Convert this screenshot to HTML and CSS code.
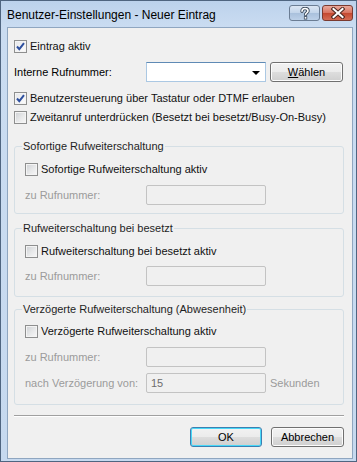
FILE: index.html
```html
<!DOCTYPE html>
<html lang="de">
<head>
    <meta charset="UTF-8">
    <title>Benutzer-Einstellungen - Neuer Eintrag</title>
    <link rel="stylesheet" href="styles.css">
</head>
<body>
    <div class="window">
        <div class="titlebar">
            <span class="title">Benutzer-Einstellungen - Neuer Eintrag</span>
            <div class="caption-buttons">
                <span class="cap-btn cap-help">
                    <svg width="12" height="13" viewBox="0 0 12 13"><path d="M3 4.2 C3 2 4.5 1.5 6 1.5 C7.8 1.5 9 2.4 9 3.9 C9 5.6 6.6 5.9 6.6 7.6" fill="none" stroke="#3c4a5c" stroke-width="3.4" stroke-linecap="round"/><path d="M3 4.2 C3 2 4.5 1.5 6 1.5 C7.8 1.5 9 2.4 9 3.9 C9 5.6 6.6 5.9 6.6 7.6" fill="none" stroke="#fff" stroke-width="1.6" stroke-linecap="round"/><rect x="4.9" y="9.2" width="3.3" height="3.3" fill="#3c4a5c"/><rect x="5.7" y="10" width="1.7" height="1.7" fill="#fff"/></svg>
                </span>
                <span class="cap-btn cap-close">
                    <svg width="14" height="12" viewBox="0 0 14 12"><path d="M2.5 2 L11.5 10 M11.5 2 L2.5 10" stroke="#4a2620" stroke-width="4" stroke-linecap="square"/><path d="M2.5 2 L11.5 10 M11.5 2 L2.5 10" stroke="#fff" stroke-width="2" stroke-linecap="square"/></svg>
                </span>
            </div>
        </div>
        <div class="client">
            <div class="content">
                <label class="check-row first">
                    <span class="checkbox checked"><svg width="11" height="11" viewBox="0 0 11 11"><path d="M2 5.5 L4.3 8.2 L9 2.2" fill="none" stroke="#2d4f9e" stroke-width="2"/></svg></span>
                    Eintrag aktiv
                </label>

                <div class="field-row combo-row">
                    <span class="field-label">Interne Rufnummer:</span>
                    <span class="combo"><span class="combo-arrow"></span></span>
                    <button class="btn btn-pick"><u>W</u>ählen</button>
                </div>

                <label class="check-row dtmf">
                    <span class="checkbox checked"><svg width="11" height="11" viewBox="0 0 11 11"><path d="M2 5.5 L4.3 8.2 L9 2.2" fill="none" stroke="#2d4f9e" stroke-width="2"/></svg></span>
                    Benutzersteuerung über Tastatur oder DTMF erlauben
                </label>

                <label class="check-row busy">
                    <span class="checkbox"></span>
                    Zweitanruf unterdrücken (Besetzt bei besetzt/Busy-On-Busy)
                </label>

                <fieldset class="group group-instant">
                    <legend>Sofortige Rufweiterschaltung</legend>
                    <label class="check-row">
                        <span class="checkbox"></span>
                        Sofortige Rufweiterschaltung aktiv
                    </label>
                    <div class="field-row">
                        <span class="field-label disabled">zu Rufnummer:</span>
                        <span class="input disabled"></span>
                    </div>
                </fieldset>

                <fieldset class="group group-busy">
                    <legend>Rufweiterschaltung bei besetzt</legend>
                    <label class="check-row">
                        <span class="checkbox"></span>
                        Rufweiterschaltung bei besetzt aktiv
                    </label>
                    <div class="field-row">
                        <span class="field-label disabled">zu Rufnummer:</span>
                        <span class="input disabled"></span>
                    </div>
                </fieldset>

                <fieldset class="group group-delay">
                    <legend>Verzögerte Rufweiterschaltung (Abwesenheit)</legend>
                    <label class="check-row">
                        <span class="checkbox"></span>
                        Verzögerte Rufweiterschaltung aktiv
                    </label>
                    <div class="field-row">
                        <span class="field-label disabled">zu Rufnummer:</span>
                        <span class="input disabled"></span>
                    </div>
                    <div class="field-row delay-row">
                        <span class="field-label disabled">nach Verzögerung von:</span>
                        <span class="input disabled">15</span>
                        <span class="unit disabled">Sekunden</span>
                    </div>
                </fieldset>

                <div class="separator"></div>

                <div class="dialog-buttons">
                    <button class="btn btn-default">OK</button>
                    <button class="btn">Abbrechen</button>
                </div>
            </div>
        </div>
    </div>
</body>
</html>
```

FILE: styles.css
```css
body {
    margin: 0;
    font-family: "Liberation Sans", Arial, sans-serif;
    font-size: 11px;
    color: #000;
    background: #2b3a4e;
}

.window {
    width: 357px;
    height: 462px;
    box-sizing: border-box;
    border: 1px solid #4f6580;
    padding: 0 3px 2px 6px;
    background: linear-gradient(to bottom, #bcd2ec 0, #cadcf1 26px, #c6d9ef 100%);
    display: flex;
    flex-direction: column;
}

.titlebar {
    height: 26px;
    display: flex;
    align-items: center;
    justify-content: space-between;
}

.title {
    font-size: 12px;
    margin-top: 1px;
}

.caption-buttons {
    display: flex;
    gap: 2px;
    align-self: flex-start;
    margin-top: 4px;
}

.cap-btn {
    height: 16px;
    box-sizing: border-box;
    border: 1px solid #6b7d94;
    border-radius: 3px;
    display: flex;
    align-items: center;
    justify-content: center;
}

.cap-help {
    width: 31px;
    background: linear-gradient(to bottom, #dbe6f3 0, #c2d4ea 50%, #a9c0dc 51%, #bcd0e8 100%);
}

.cap-close {
    width: 31px;
    border-color: #7a3a30;
    background: linear-gradient(to bottom, #e9a99c 0, #d8725f 50%, #c3472f 51%, #d46c55 100%);
}

.client {
    flex: 1;
    border: 1px solid #8fa6c0;
    background: #f0f0f0;
}

.content {
    padding: 12px 8px 0 6px;
}

.check-row {
    display: flex;
    align-items: center;
    height: 13px;
    line-height: 13px;
    white-space: nowrap;
    color: #111;
}

.checkbox {
    width: 13px;
    height: 13px;
    box-sizing: border-box;
    border: 1px solid #8e8f8f;
    background: linear-gradient(135deg, #cdd0d4 0, #e8e9ea 55%, #f8f8f8 100%);
    box-shadow: inset 0 0 0 1px #f4f4f4;
    margin-right: 3px;
    flex: none;
    display: flex;
    align-items: center;
    justify-content: center;
}

.checkbox.checked {
    background: linear-gradient(135deg, #e4e6ea 0, #f4f4f5 60%, #fcfcfc 100%);
}

.field-row {
    display: flex;
    align-items: center;
    height: 20px;
}

.field-label {
    width: 132px;
    flex: none;
}

.group .field-label {
    width: 121px;
}

.disabled {
    color: #9b9b9b;
}

.combo-row {
    margin-top: 9px;
}

.combo {
    width: 120px;
    height: 20px;
    box-sizing: border-box;
    border: 1px solid #abc8e3;
    border-top-color: #5f8ab5;
    background: #fff;
    position: relative;
}

.combo-arrow {
    position: absolute;
    right: 5px;
    top: 8px;
    border-left: 4px solid transparent;
    border-right: 4px solid transparent;
    border-top: 4px solid #000;
}

.btn {
    font-family: inherit;
    font-size: 11px;
    color: #000;
    height: 20px;
    width: 73px;
    padding: 0;
    box-sizing: border-box;
    border: 1px solid #707070;
    border-radius: 3px;
    background: linear-gradient(to bottom, #f2f2f2 0, #ebebeb 50%, #dddddd 51%, #cfcfcf 100%);
    box-shadow: inset 0 0 0 1px #fcfcfc;
}

.btn-pick {
    margin-left: 4px;
}

.btn-default {
    border-color: #3c7fb1;
    box-shadow: inset 0 0 0 1px #48d8f8;
    width: 72px;
}

.dtmf {
    margin-top: 10px;
}

.busy {
    margin-top: 6px;
}

.group {
    margin: 0;
    padding: 0 0 0 10px;
    border: 1px solid #d5dfe5;
    border-radius: 3px;
    min-width: 0;
}

.group legend {
    margin-left: -3px;
    padding: 0 1px;
    line-height: 14px;
    color: #1f1f1f;
}

.group .check-row {
    margin-top: 10px;
}

.group-instant {
    margin-top: 15px;
    padding-bottom: 8px;
}

.group-instant .field-row {
    margin-top: 9px;
}

.group-busy {
    margin-top: 7px;
    padding-bottom: 10px;
}

.group-busy .field-row {
    margin-top: 8px;
}

.group-delay {
    margin-top: 5px;
    padding-bottom: 11px;
}

.group-delay .check-row {
    margin-top: 9px;
}

.group-delay .field-row {
    margin-top: 9px;
}

.group-delay .delay-row {
    margin-top: 6px;
}

.input {
    width: 120px;
    height: 20px;
    box-sizing: border-box;
    border: 1px solid #c3c3c3;
    border-radius: 2px;
    background: #f0f0f0;
    padding-left: 4px;
    line-height: 18px;
    color: #6d6d6d;
}

.unit {
    margin-left: 4px;
}

.separator {
    margin-top: 10px;
    border-top: 1px solid #a0a0a0;
    border-bottom: 1px solid #fff;
}

.dialog-buttons {
    margin-top: 10px;
    display: flex;
    justify-content: flex-end;
    gap: 9px;
}
```
